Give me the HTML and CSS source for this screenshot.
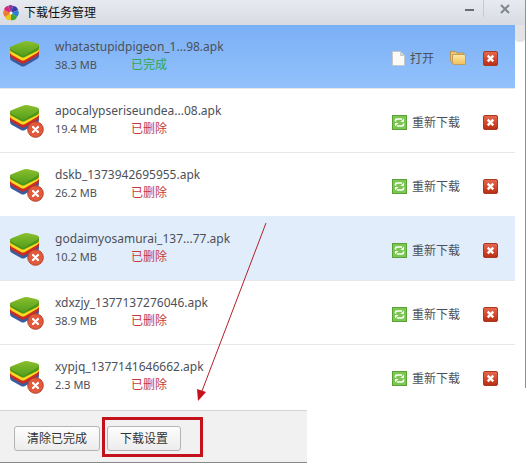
FILE: index.html
```html
<!DOCTYPE html>
<html lang="zh-CN">
<head>
    <meta charset="UTF-8">
    <title>下载任务管理</title>
    <meta name="viewport" content="width=device-width, initial-scale=1.0">
    <link rel="stylesheet" href="styles.css">
</head>
<body>
    <svg class="sprite" aria-hidden="true">
        <defs>
            <linearGradient id="greenTop" x1="0" y1="0" x2="0" y2="1">
                <stop offset="0" stop-color="#8abf2c"/>
                <stop offset="1" stop-color="#55a01e"/>
            </linearGradient>
            <linearGradient id="redBox" x1="0" y1="0" x2="0" y2="1">
                <stop offset="0" stop-color="#e8694f"/>
                <stop offset="1" stop-color="#bd2c12"/>
            </linearGradient>
            <linearGradient id="folderFront" x1="0" y1="0" x2="0" y2="1">
                <stop offset="0" stop-color="#fde9a6"/>
                <stop offset="1" stop-color="#efbf5c"/>
            </linearGradient>
        </defs>
        <symbol id="stack" viewBox="0 0 36 36">
            <path d="M1 14 V19 Q1 21 3 22 L12 27 Q14 28 16 27 L28 20 Q30 19 30 17 V12Z" fill="#3a5c9e"/>
            <path d="M1 12 V16 Q1 18 3 19 L12 24 Q14 25 16 24 L28 17 Q30 16 30 14 V10Z" fill="#cf2a22"/>
            <path d="M1 10 V13 Q1 15 3 16 L12 21 Q14 22 16 21 L28 14 Q30 13 30 11 V8Z" fill="#fbd91c"/>
            <path d="M1 8 V11 Q1 12 3 13 L12 18 Q14 19 16 18 L28 12 Q30 11 30 9 V6Z" fill="#4c931d"/>
            <path d="M3 7 L13 3 Q15 2 18 2 L27 4 Q30 5 30 6 Q30 8 28 9 L16 16 Q14 17 12 16 L3 11 Q1 10 1 9 Q1 8 3 7Z" fill="url(#greenTop)"/>
        </symbol>
        <symbol id="failed" viewBox="0 0 17 17">
            <circle cx="8.500" cy="8.500" r="7.800" fill="#e25a3c" stroke="#b5412a"/>
            <path d="M6 6 L11 11 M11 6 L6 11" stroke="#fff" stroke-width="2.200" stroke-linecap="round"/>
        </symbol>
        <symbol id="remove" viewBox="0 0 15 15">
            <rect x=".5" y=".5" width="14" height="14" rx="1.500" fill="url(#redBox)" stroke="#a33a22"/>
            <path d="M4.700 4.700 L10.300 10.300 M10.300 4.700 L4.700 10.300" stroke="#fff" stroke-width="2.400"/>
        </symbol>
        <symbol id="retry" viewBox="0 0 15 15">
            <rect x=".5" y=".5" width="14" height="14" fill="#7cc653" stroke="#59a334"/>
            <path d="M3.500 6.500 V5.500 Q3.500 4 5 4 H10 M11.500 8.500 V9.500 Q11.500 11 10 11 H5" fill="none" stroke="#fff" stroke-width="1.600"/>
            <path d="M12 3.500 V7 H8.500Z M3 11.500 V8 H6.500Z" fill="#fff"/>
        </symbol>
        <symbol id="file" viewBox="0 0 13 15">
            <path d="M.5 .5 H8.500 L12.500 4.500 V14.500 H.5Z" fill="#fbfaf6" stroke="#c5c8c8"/>
            <path d="M8.500 .5 V4.500 H12.500Z" fill="#dcdcd4" stroke="#c5c8c8"/>
        </symbol>
        <symbol id="folder" viewBox="0 0 17 15">
            <path d="M.5 .5 H5.500 L7 2 H13.500 V12.500 H2.500 L.5 10Z" fill="#edc877" stroke="#b89550"/>
            <path d="M2.500 3.500 H14 Q15.500 3.500 15.500 5 V13.500 H4 Q2.500 13.500 2.500 12Z" fill="url(#folderFront)" stroke="#c39e54"/>
        </symbol>
    </svg>

    <div class="window">
        <header class="titlebar">
            <svg class="logo" viewBox="-8 -8 16 16" aria-hidden="true">
                <path d="M0 0 L-3 -7 Q0 -9 2 -7Z" fill="#8b3a9c"/>
                <path d="M0 0 L2 -7 Q6 -7 7 -3Z" fill="#3a3aa8"/>
                <path d="M0 0 L7 -3 Q9 1 6 4Z" fill="#2d7fd0"/>
                <path d="M0 0 L6 4 Q4 8 0 7Z" fill="#3fa535"/>
                <path d="M0 0 L0 7 Q-4 8 -6 4Z" fill="#f0c419"/>
                <path d="M0 0 L-6 4 Q-9 1 -7 -3Z" fill="#ee7a2c"/>
                <path d="M0 0 L-7 -3 Q-6 -7 -3 -7Z" fill="#d9277b"/>
                <circle r="1.500" fill="#fff"/>
            </svg>
            <h1 class="title">下载任务管理</h1>
            <button class="win-btn minimize" type="button" aria-label="最小化">
                <svg width="9" height="2"><rect width="9" height="2" fill="#666b75"/></svg>
            </button>
            <button class="win-btn close" type="button" aria-label="关闭">
                <svg width="10" height="10"><path d="M1 1 L9 9 M9 1 L1 9" stroke="#80858f" stroke-width="2"/></svg>
            </button>
        </header>

        <main class="content">
            <ul class="tasks">
                <li class="task selected">
                    <div class="app-icon"><svg class="stack"><use href="#stack"/></svg></div>
                    <div class="info">
                        <div class="name">whatastupidpigeon_1...98.apk</div>
                        <div class="meta"><span class="size">38.3 MB</span><span class="done">已完成</span></div>
                    </div>
                    <div class="actions">
                        <button class="action" type="button"><svg class="icon-file"><use href="#file"/></svg>打开</button>
                        <button class="action" type="button" aria-label="打开文件夹"><svg class="icon-folder"><use href="#folder"/></svg></button>
                        <button class="action" type="button" aria-label="删除"><svg class="icon"><use href="#remove"/></svg></button>
                    </div>
                </li>
                <li class="task">
                    <div class="app-icon"><svg class="stack"><use href="#stack"/></svg><svg class="badge"><use href="#failed"/></svg></div>
                    <div class="info">
                        <div class="name">apocalypseriseundea...08.apk</div>
                        <div class="meta"><span class="size">19.4 MB</span><span class="deleted">已删除</span></div>
                    </div>
                    <div class="actions">
                        <button class="action" type="button"><svg class="icon"><use href="#retry"/></svg>重新下载</button>
                        <button class="action" type="button" aria-label="删除"><svg class="icon"><use href="#remove"/></svg></button>
                    </div>
                </li>
                <li class="task">
                    <div class="app-icon"><svg class="stack"><use href="#stack"/></svg><svg class="badge"><use href="#failed"/></svg></div>
                    <div class="info">
                        <div class="name">dskb_1373942695955.apk</div>
                        <div class="meta"><span class="size">26.2 MB</span><span class="deleted">已删除</span></div>
                    </div>
                    <div class="actions">
                        <button class="action" type="button"><svg class="icon"><use href="#retry"/></svg>重新下载</button>
                        <button class="action" type="button" aria-label="删除"><svg class="icon"><use href="#remove"/></svg></button>
                    </div>
                </li>
                <li class="task hovered">
                    <div class="app-icon"><svg class="stack"><use href="#stack"/></svg><svg class="badge"><use href="#failed"/></svg></div>
                    <div class="info">
                        <div class="name">godaimyosamurai_137...77.apk</div>
                        <div class="meta"><span class="size">10.2 MB</span><span class="deleted">已删除</span></div>
                    </div>
                    <div class="actions">
                        <button class="action" type="button"><svg class="icon"><use href="#retry"/></svg>重新下载</button>
                        <button class="action" type="button" aria-label="删除"><svg class="icon"><use href="#remove"/></svg></button>
                    </div>
                </li>
                <li class="task">
                    <div class="app-icon"><svg class="stack"><use href="#stack"/></svg><svg class="badge"><use href="#failed"/></svg></div>
                    <div class="info">
                        <div class="name">xdxzjy_1377137276046.apk</div>
                        <div class="meta"><span class="size">38.9 MB</span><span class="deleted">已删除</span></div>
                    </div>
                    <div class="actions">
                        <button class="action" type="button"><svg class="icon"><use href="#retry"/></svg>重新下载</button>
                        <button class="action" type="button" aria-label="删除"><svg class="icon"><use href="#remove"/></svg></button>
                    </div>
                </li>
                <li class="task">
                    <div class="app-icon"><svg class="stack"><use href="#stack"/></svg><svg class="badge"><use href="#failed"/></svg></div>
                    <div class="info">
                        <div class="name">xypjq_1377141646662.apk</div>
                        <div class="meta"><span class="size">2.3 MB</span><span class="deleted">已删除</span></div>
                    </div>
                    <div class="actions">
                        <button class="action" type="button"><svg class="icon"><use href="#retry"/></svg>重新下载</button>
                        <button class="action" type="button" aria-label="删除"><svg class="icon"><use href="#remove"/></svg></button>
                    </div>
                </li>
            </ul>
            <div class="scrollbar"><div class="thumb"></div></div>
        </main>

        <footer class="toolbar">
            <button class="btn" type="button">清除已完成</button>
            <button class="btn" type="button">下载设置</button>
            <div class="highlight"></div>
        </footer>

        <svg class="arrow" viewBox="0 0 72 182" aria-hidden="true">
            <path d="M70 1 L6 169" stroke="#b5202a" fill="none"/>
            <path d="M1 167 L10 170 L2 179Z" fill="#c8101a"/>
        </svg>
    </div>
</body>
</html>
```

FILE: styles.css
```css
body {
    margin: 0;
    background-color: #fff;
    color: #4c5058;
    font-family: "Noto Sans", "Noto Sans CJK SC", sans-serif;
    font-size: 12px;
    line-height: 18px;
}
button {
    padding: 0;
    border: none;
    background: none;
    color: inherit;
    font: inherit;
    cursor: pointer;
}
svg {
    display: block;
    flex-shrink: 0;
}
.sprite {
    position: absolute;
    width: 0;
    height: 0;
}
.window {
    position: relative;
    margin-right: 2px;
}

/* Title bar */
.titlebar {
    display: flex;
    align-items: center;
    box-sizing: border-box;
    height: 25px;
    padding-left: 3px;
    border-right: 1px solid #8d9097;
    background: linear-gradient(#e7eaf0, #d8dbe2);
}
.logo {
    width: 16px;
    height: 16px;
}
.title {
    flex: 1;
    margin: 0 0 0 5px;
    color: #111;
    font-size: 12px;
    font-weight: normal;
}
.win-btn {
    display: flex;
    justify-content: center;
    align-items: center;
    height: 17px;
    align-self: flex-start;
}
.minimize {
    width: 29px;
    padding-top: 3px;
    border-right: 1px solid #c5c9d1;
}
.close {
    width: 41px;
}

/* Task list */
.content {
    display: flex;
    align-items: flex-start;
}
.tasks {
    flex: 1;
    margin: 0;
    padding: 0 0 2px;
    list-style: none;
}
.task {
    display: flex;
    align-items: center;
    height: 63px;
    padding: 0 17px 0 9px;
    border-top: 1px solid #e8e8e8;
}
.task.selected {
    border-top: none;
    background: linear-gradient(#7ab0f6, #93c1fb);
}
.task.hovered {
    border-top-color: #e2edfb;
    background-color: #e2edfb;
}
.app-icon {
    position: relative;
    width: 36px;
    height: 36px;
}
.stack {
    width: 36px;
    height: 36px;
}
.badge {
    position: absolute;
    right: 1px;
    bottom: 1px;
    width: 17px;
    height: 17px;
}
.info {
    flex: 1;
    margin-left: 10px;
    padding-bottom: 2px;
}
.name {
    font-size: 12px;
}
.meta {
    display: flex;
}
.size {
    width: 76px;
    font-size: 11px;
}
.done {
    color: #2fa84f;
}
.deleted {
    color: #c8393d;
}
.actions {
    display: flex;
    justify-content: space-between;
    align-items: center;
    width: 106px;
    padding-top: 4px;
}
.action {
    display: flex;
    align-items: center;
    gap: 5px;
}
.icon {
    width: 15px;
    height: 15px;
}
.icon-file {
    width: 13px;
    height: 15px;
}
.icon-folder {
    width: 17px;
    height: 15px;
}
.scrollbar {
    width: 10px;
    height: 363px;
    border-right: 1px solid #8d9097;
}
.thumb {
    height: 17px;
    border-radius: 0 0 4px 4px;
    background-color: #e3e3e6;
}

/* Bottom bar */
.toolbar {
    position: relative;
    display: flex;
    align-items: center;
    gap: 7px;
    box-sizing: border-box;
    width: fit-content;
    height: 53px;
    padding: 4px 126px 0 14px;
    border-top: 1px solid #d5d5d5;
    border-bottom: 1px solid #888;
    background-color: #f1f1f1;
}
.btn {
    height: 25px;
    padding: 0 12px;
    border: 1px solid #b4b4b4;
    border-radius: 3px;
    background: linear-gradient(#fdfdfd, #ececec);
    color: #333;
}

/* Marks over the window */
.highlight {
    position: absolute;
    top: 6px;
    left: 102px;
    width: 95px;
    height: 34px;
    border: 3px solid #c3121a;
    pointer-events: none;
}
.arrow {
    position: absolute;
    top: 222px;
    left: 196px;
    width: 72px;
    height: 182px;
    pointer-events: none;
}
```
